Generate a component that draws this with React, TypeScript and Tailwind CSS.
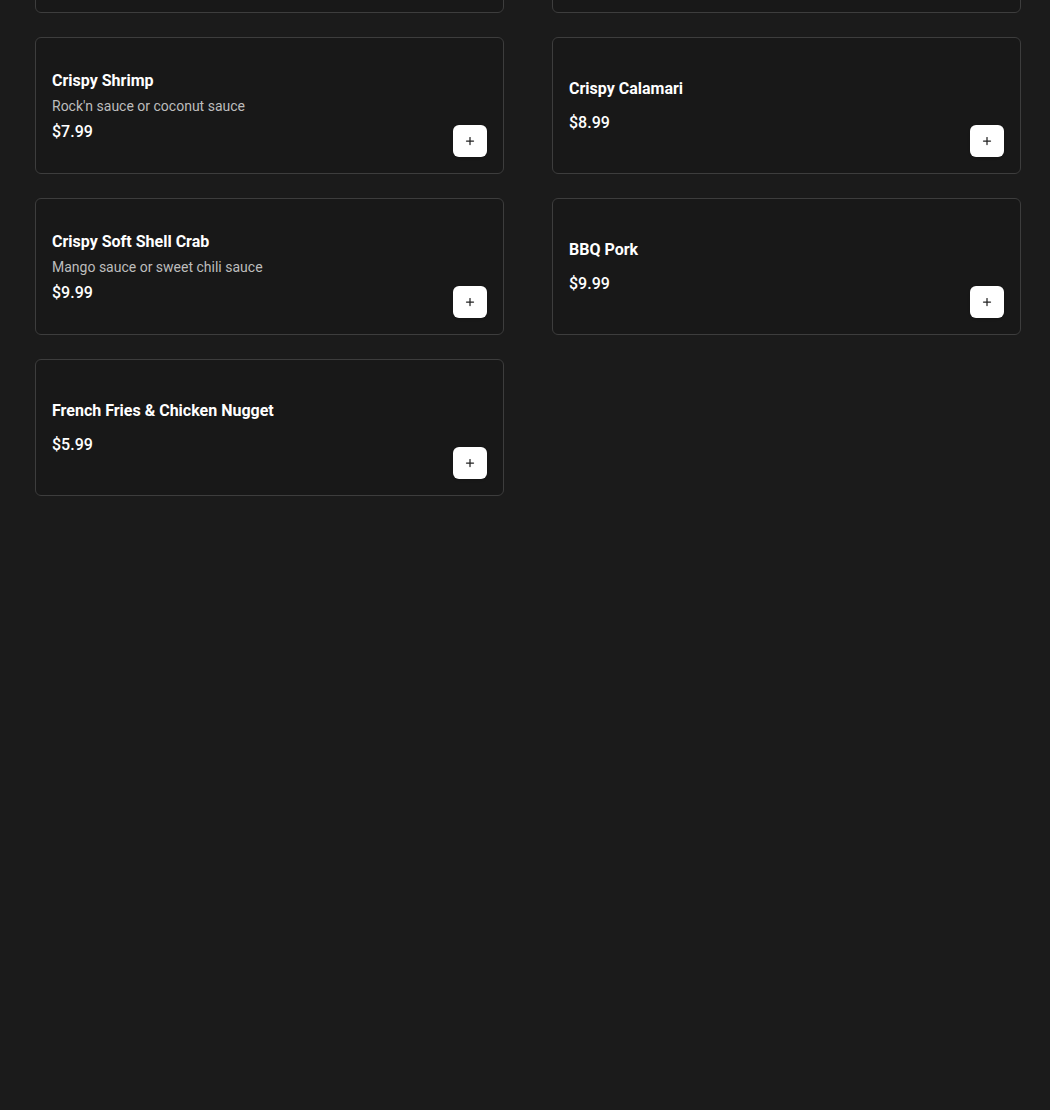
import { Plus } from "lucide-react";

interface MenuItem {
  name: string;
  description?: string;
  price: string;
}

const items: MenuItem[] = [
  {
    name: "Crispy Shrimp",
    description: "Rock'n sauce or coconut sauce",
    price: "$7.99",
  },
  { name: "Crispy Calamari", price: "$8.99" },
  {
    name: "Crispy Soft Shell Crab",
    description: "Mango sauce or sweet chili sauce",
    price: "$9.99",
  },
  { name: "BBQ Pork", price: "$9.99" },
  { name: "French Fries & Chicken Nugget", price: "$5.99" },
];

const cardClass =
  "flex h-[137px] justify-between rounded-md border border-[#3d3d3d] bg-[#181818] p-4";

function MenuCard({ item }: { item: MenuItem }) {
  return (
    <div className={cardClass}>
      <div className={`self-center ${item.description ? "pt-[2px]" : ""}`}>
        <h3 className="text-[16px] font-bold leading-[22px] text-white">
          {item.name}
        </h3>
        {item.description && (
          <p className="mt-[4px] text-[14px] leading-[20px] text-[#bdbdbd]">
            {item.description}
          </p>
        )}
        <p
          className={`${item.description ? "mt-[5px]" : "mt-[12px]"} text-[16px] font-medium leading-[22px] text-white`}
        >
          {item.price}
        </p>
      </div>
      <button className="flex h-[32px] w-[34px] items-center justify-center self-end rounded-md bg-white text-[#222] shadow-sm">
        <Plus className="h-3 w-3" strokeWidth={2.5} />
      </button>
    </div>
  );
}

export default function App() {
  return (
    <div
      className="min-h-[1110px] overflow-hidden bg-[#1b1b1b]"
      style={{ fontFamily: "Roboto, 'Liberation Sans', sans-serif" }}
    >
      <div className="-mt-[124px] grid grid-cols-2 gap-x-[48px] gap-y-[24px] pl-[35px] pr-[29px]">
        {/* previous row, scrolled out of view */}
        <div className={cardClass} />
        <div className={cardClass} />
        {items.map((item) => (
          <MenuCard key={item.name} item={item} />
        ))}
      </div>
    </div>
  );
}
